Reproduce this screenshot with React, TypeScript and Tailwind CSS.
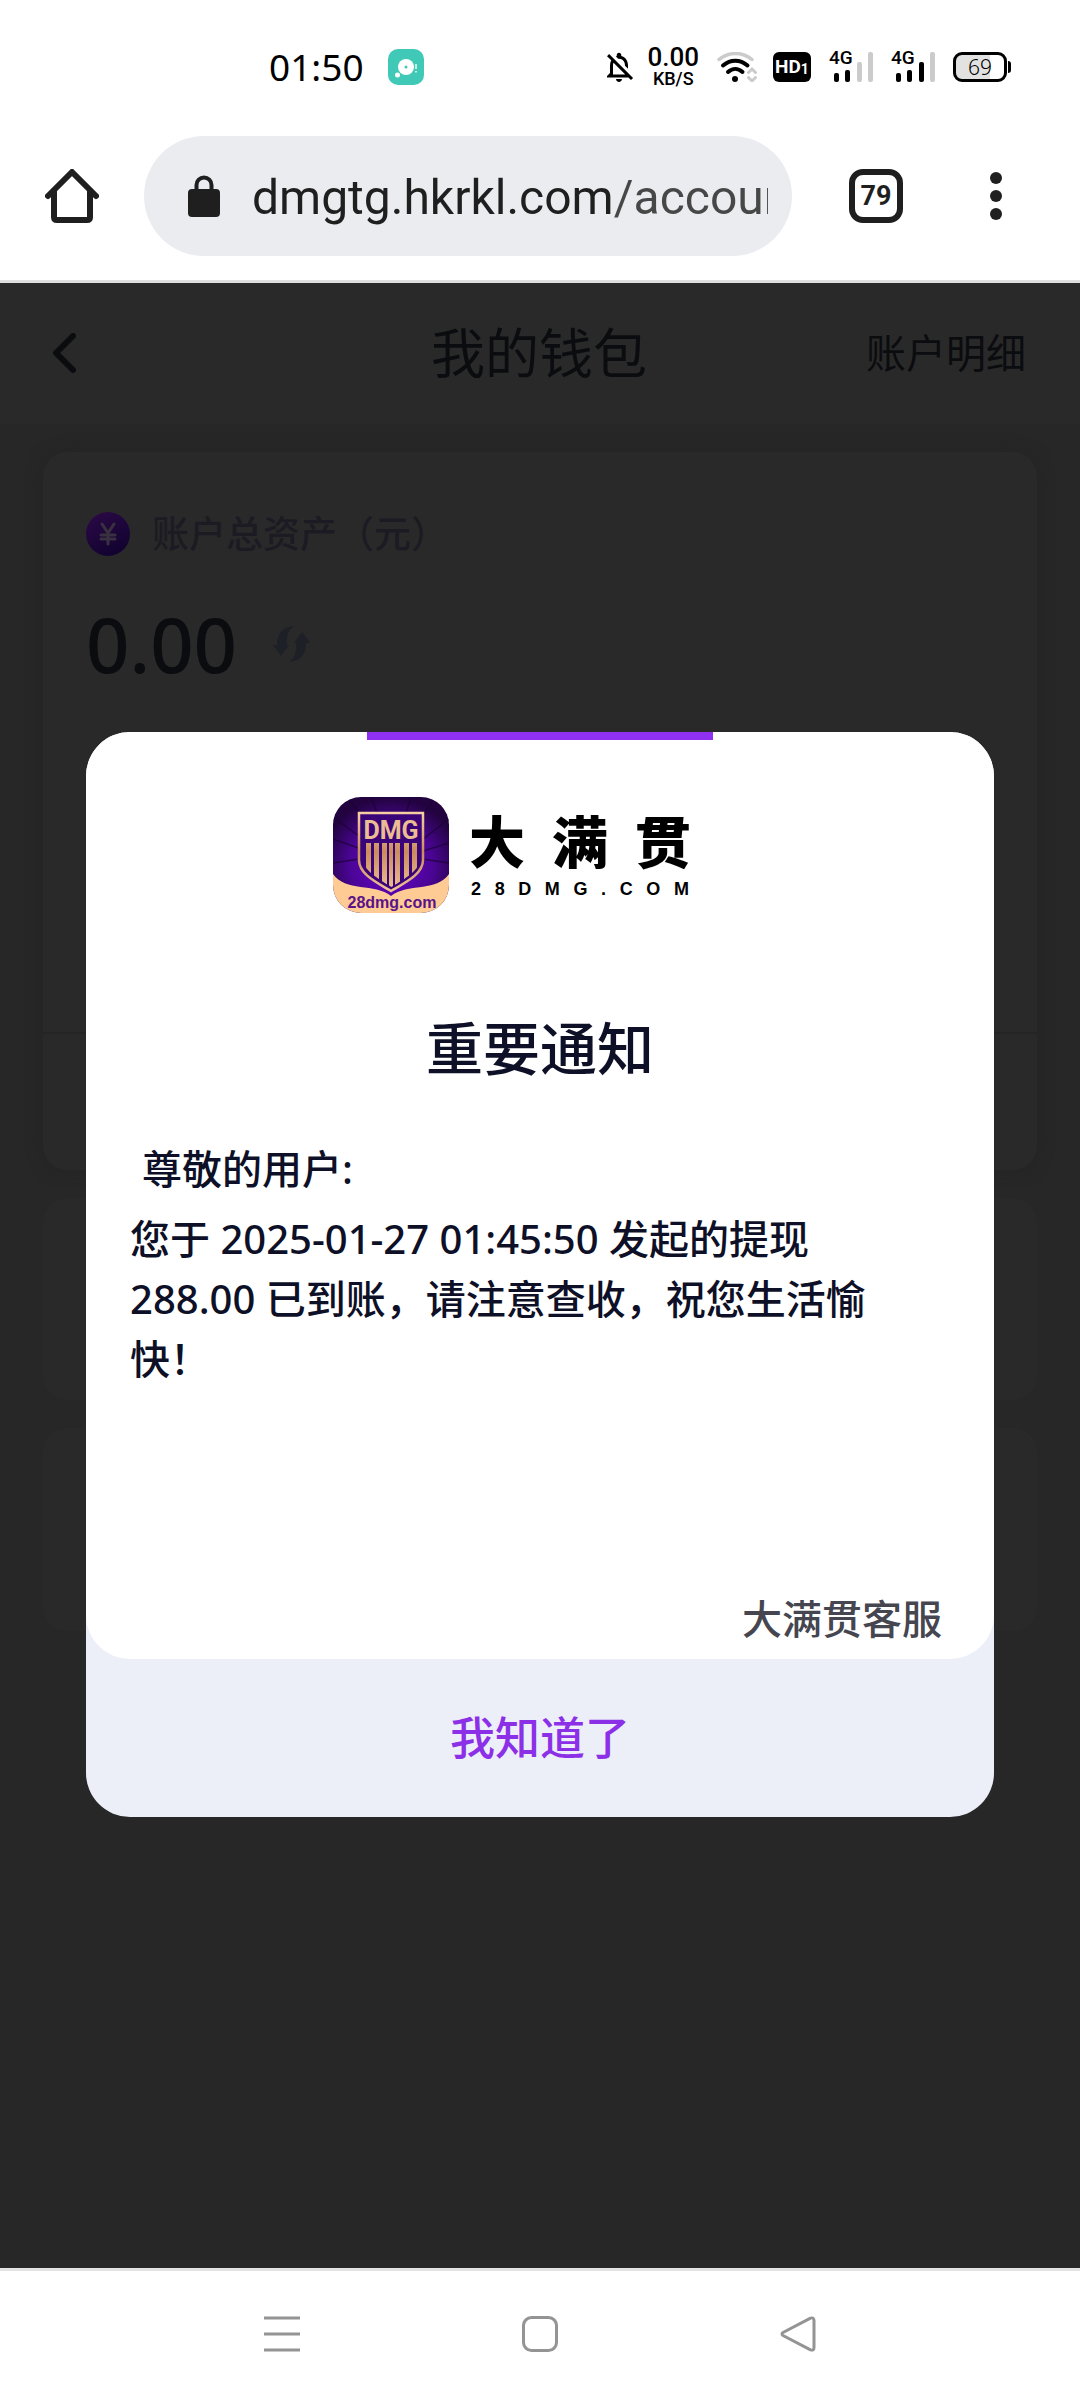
import React, { useState } from 'react'
import { MdOutlineNotificationsOff } from 'react-icons/md'

interface SignalProps {
  label: string
  strength: number
}

const bars = [
  { x: 5, y: 21 },
  { x: 16, y: 18 },
  { x: 28, y: 10 },
  { x: 39, y: 0 }
]

const Signal: React.FC<SignalProps> = ({ label, strength }) => (
  <div className="relative h-[30px] w-[45px]">
    <svg viewBox="0 0 45 30" className="h-full w-full" aria-hidden="true">
      {bars.map((bar, index) => (
        <rect
          key={bar.x}
          x={bar.x}
          y={bar.y}
          width="5"
          height={30 - bar.y}
          rx="2"
          fill={index < strength ? '#000' : '#cbcbcb'}
        />
      ))}
    </svg>
    <span className="absolute -top-1 left-0 font-['Roboto'] text-[19px] leading-[20px] font-medium">
      {label}
    </span>
  </div>
)

const WifiIcon = () => (
  <svg viewBox="0 0 40 30" className="h-[30px] w-10" fill="none" strokeLinecap="round" aria-hidden="true">
    <path d="M2 7.500C12 -.5 25 -.5 35 7.500" stroke="#cbcbcb" strokeWidth="3.500" />
    <path d="M6 13.500C13.500 7 23 7 30.500 13.500" stroke="#000" strokeWidth="4" />
    <path d="M11 20C15.500 16 21 16 25.500 20" stroke="#000" strokeWidth="4" />
    <circle cx="18" cy="27" r="3" fill="#000" />
    <path d="M31.500 20.500L35 17l3.500 3.500M31.500 25.500L35 29l3.500-3.500" stroke="#cbcbcb" strokeWidth="3" />
  </svg>
)

const StatusBar = () => (
  <div className="flex h-[112px] items-center justify-between pt-[22px] pr-[69px] pl-[269px] text-black">
    <div className="flex items-center gap-6">
      <span className="text-[37px] leading-[46px]">01:50</span>
      <svg viewBox="0 0 36 36" className="size-9" aria-hidden="true">
        <rect width="36" height="36" rx="10" fill="#3fc9b6" />
        <circle cx="18" cy="18" r="8" fill="#fff" />
        <circle cx="18" cy="18" r="1.500" fill="#3fc9b6" />
        <circle cx="9.500" cy="26" r="2.500" fill="#fff" />
        <path d="M28 15v5M28 22v1.500" stroke="#c4efe8" strokeWidth="2" />
      </svg>
    </div>
    <div className="flex items-center">
      <MdOutlineNotificationsOff className="mr-2.5 size-9" />
      <div className="mr-[18px] flex flex-col items-center font-['Roboto'] font-medium">
        <span className="text-[26px] leading-[24px]">0.00</span>
        <span className="text-[18px] leading-[20px]">KB/S</span>
      </div>
      <WifiIcon />
      <span className="mr-[18px] ml-4 flex h-[30px] w-[38px] items-center justify-center rounded-md bg-black font-['Roboto'] text-[19px] leading-[30px] font-bold text-white">
        HD<small className="pt-1 text-[14px]">1</small>
      </span>
      <Signal label="4G" strength={2} />
      <div className="w-[17px]" />
      <Signal label="4G" strength={3} />
      <div className="ml-[17px] flex items-center gap-px">
        <div className="h-[30px] w-[54px] overflow-hidden rounded-[9px] border-3 border-black bg-[linear-gradient(90deg,#e2e2e2_34px,#fff_34px)] text-center text-[21px] leading-[24px] font-light">
          69
        </div>
        <div className="h-3 w-[3px] rounded-r-sm bg-black" />
      </div>
    </div>
  </div>
)

const BrowserBar = () => (
  <div className="flex items-center border-b-3 border-[#dfdfdf] py-6 pr-[78px] pl-[45px] text-[#1f1f1f]">
    <button aria-label="主页" className="mr-[45px]">
      <svg viewBox="0 0 54 54" className="size-[54px]" fill="none" stroke="currentColor" strokeLinecap="round" aria-hidden="true">
        <path d="M3 27L27 3l24 24" strokeWidth="6" strokeLinejoin="round" />
        <path d="M9 22v26q0 3 3 3h30q3 0 3-3V22" strokeWidth="6" />
      </svg>
    </button>
    <label className="flex h-[120px] min-w-0 flex-1 items-center rounded-full bg-[#ebecf0] pr-6 pl-11">
      <svg viewBox="0 0 32 42" className="mr-8 h-[42px] w-8 shrink-0" aria-label="安全连接">
        <path d="M8.500 16V10a7.500 7.500 0 0 1 15 0v6" fill="none" stroke="#1f1f1f" strokeWidth="4" />
        <rect y="14" width="32" height="28" rx="4" fill="#1f1f1f" />
      </svg>
      <input
        type="text"
        aria-label="网址"
        defaultValue="dmgtg.hkrkl.com/account"
        className="h-16 w-full min-w-0 bg-[linear-gradient(90deg,#1f1f1f_360px,#474747_360px)] bg-clip-text pt-0.5 font-['Roboto'] text-[48px] leading-[62px] text-transparent outline-none"
      />
    </label>
    <button
      aria-label="标签页"
      className="ml-[57px] flex size-[54px] items-center justify-center rounded-[14px] border-6 border-current font-['Roboto'] text-[27px] leading-[42px] font-bold"
    >
      79
    </button>
    <button aria-label="更多" className="ml-[87px]">
      <svg viewBox="0 0 12 48" className="h-12 w-3" fill="currentColor" aria-hidden="true">
        <circle cx="6" cy="6" r="6" />
        <circle cx="6" cy="24" r="6" />
        <circle cx="6" cy="42" r="6" />
      </svg>
    </button>
  </div>
)

const Wallet = () => (
  <div className="text-[#0b0c0f]">
    <header className="grid h-[141px] grid-cols-[1fr_auto_1fr] items-center bg-[#292929] pr-[54px] pb-0.5 pl-[52px]">
      <button aria-label="返回">
        <svg viewBox="0 0 24 40" className="h-10 w-6" fill="none" stroke="currentColor" strokeWidth="6" strokeLinecap="round" strokeLinejoin="round" aria-hidden="true">
          <path d="M21 3L4 20l17 17" />
        </svg>
      </button>
      <h1 className="text-[54px] leading-[60px]">我的钱包</h1>
      <a href="#detail" className="justify-self-end text-[40px] leading-[60px]">账户明细</a>
    </header>

    <main className="flex flex-col gap-7 px-[43px] pt-7">
      <section className="rounded-3xl bg-[#292929] shadow-[0_0_16px_#242424]">
        <div className="flex h-[582px] flex-col gap-6 border-b-2 border-[#242424] px-[43px] pt-[52px]">
          <div className="flex items-center gap-[22px] text-[#1c1b23]">
            <svg viewBox="0 0 44 44" className="size-11" aria-hidden="true">
              <defs>
                <linearGradient id="coin" x1="0" y1="0" x2="0.500" y2="1">
                  <stop offset="0" stopColor="#2c0947" />
                  <stop offset="1" stopColor="#130331" />
                </linearGradient>
              </defs>
              <circle cx="22" cy="22" r="22" fill="url(#coin)" />
              <path d="M16 12l6 9 6-9M22 21v11M15 23h14M15 27h14" fill="none" stroke="#38313f" strokeWidth="3" strokeLinecap="round" />
            </svg>
            <span className="text-[37px] leading-[60px] font-medium">账户总资产（元）</span>
          </div>
          <div className="flex items-center gap-9">
            <span className="text-[76px] leading-[112px] font-medium">0.00</span>
            <button aria-label="刷新" className="text-[#1d2027]">
              <svg viewBox="0 0 37 36" className="h-9 w-[37px]" fill="currentColor" aria-hidden="true">
                <path d="M21 0C9 1 4 8 4 19H0l8 11 8-11h-2C13 11 15 4 21 0Z" />
                <path d="M16 36c12-1 17-8 17-19h4L29 6l-8 11h2c1 8-1 15-7 19Z" />
              </svg>
            </button>
          </div>
        </div>
        <div className="h-[136px]" />
      </section>
      <section className="h-[202px] rounded-3xl bg-[#292929]" />
      <section className="h-[203px] rounded-3xl bg-[#292929]" />
    </main>
  </div>
)

const LogoMark = () => (
  <svg viewBox="0 0 116 116" className="size-[116px]" role="img" aria-label="28dmg.com">
    <defs>
      <radialGradient id="violet" cx="0.500" cy="0.600" r="0.600">
        <stop offset="0" stopColor="#6a04cf" />
        <stop offset="0.600" stopColor="#4a0594" />
        <stop offset="1" stopColor="#22033f" />
      </radialGradient>
      <linearGradient id="gold" gradientUnits="userSpaceOnUse" x1="0" y1="16" x2="0" y2="94">
        <stop offset="0" stopColor="#f6cfa4" />
        <stop offset="0.500" stopColor="#c98c5f" />
        <stop offset="1" stopColor="#f0c195" />
      </linearGradient>
      <clipPath id="tile">
        <rect width="116" height="116" rx="28" />
      </clipPath>
      <clipPath id="shield">
        <path d="M30 20h57v42c0 11-14 19-28.500 28C44 81 30 73 30 62Z" />
      </clipPath>
    </defs>
    <g clipPath="url(#tile)">
      <rect width="116" height="116" fill="url(#violet)" />
      <path d="M0 20l30 22M0 42l28 10M14 0l20 26M38 0l6 16M78 0l-5 16M102 0L84 28M116 22L90 42M116 46L90 54M0 66l26-4M116 66l-26-4" stroke="#1d0238" strokeWidth="1.500" opacity="0.700" />
      <path d="M0 77C12 95 42 86 58 99 74 86 104 95 116 77v39H0Z" fill="#fdcb93" />
      <path d="M26 16h64v47c0 14-17 22-32 31C43 85 26 77 26 63Z" fill="#3a0478" stroke="url(#gold)" strokeWidth="2.500" />
      <g clipPath="url(#shield)">
        <rect x="33" y="46" width="5" height="40" fill="url(#gold)" />
        <rect x="41" y="46" width="5" height="40" fill="url(#gold)" />
        <rect x="49" y="46" width="5" height="44" fill="url(#gold)" />
        <rect x="56" y="46" width="4" height="46" fill="url(#gold)" />
        <rect x="62" y="46" width="5" height="44" fill="url(#gold)" />
        <rect x="71" y="46" width="5" height="40" fill="url(#gold)" />
        <rect x="79" y="46" width="5" height="40" fill="url(#gold)" />
      </g>
      <text x="58" y="42" textAnchor="middle" fontSize="25" fontWeight="700" fill="#eabd92" className="font-['Roboto']">
        DMG
      </text>
    </g>
    <text x="59" y="111" textAnchor="middle" fontSize="16" fontWeight="700" fill="#5a128a" className="font-['Liberation_Sans']">
      28dmg.com
    </text>
  </svg>
)

const Logo = () => (
  <div className="flex items-center gap-5 px-[203px]">
    <LogoMark />
    <div className="flex w-[222px] flex-col gap-2 text-black">
      <div className="flex justify-between text-[56px] leading-[60px] font-black">
        {['大', '满', '贯'].map((char) => (
          <span key={char}>{char}</span>
        ))}
      </div>
      <div className="flex justify-between px-0.5 font-['Liberation_Sans'] text-[18px] leading-5 font-bold">
        {'28DMG.COM'.split('').map((char, index) => (
          <span key={index}>{char}</span>
        ))}
      </div>
    </div>
  </div>
)

interface NoticeDialogProps {
  onClose: () => void
}

const NoticeDialog: React.FC<NoticeDialogProps> = ({ onClose }) => (
  <div className="absolute inset-0 flex items-center px-[86px] pb-0.5">
    <div role="dialog" aria-labelledby="notice-title" className="w-full overflow-hidden rounded-[44px] bg-[#edeff8]">
      <div className="flex flex-col rounded-b-[44px] bg-white px-11 pb-2.5 text-[#0d1026]">
        <div className="mb-[57px] h-2 w-[346px] self-center bg-[#9030f0]" />
        <Logo />
        <h2 id="notice-title" className="mt-[95px] text-center text-[57px] leading-[80px] font-medium">
          重要通知
        </h2>
        <div className="mt-[51px] min-h-[450px] pr-11 text-[40px] leading-[60px] font-medium">
          <p className="mb-2.5 px-3">尊敬的用户:</p>
          <p>您于 2025-01-27 01:45:50 发起的提现 288.00 已到账，请注意查收，祝您生活愉快！</p>
        </div>
        <p className="px-2 text-right text-[40px] leading-[60px] font-medium text-[#45464f]">大满贯客服</p>
      </div>
      <button onClick={onClose} className="h-[158px] w-full text-[45px] leading-[60px] font-medium text-[#8c30e8]">
        我知道了
      </button>
    </div>
  </div>
)

const NavBar = () => (
  <nav className="flex h-[132px] items-center justify-between border-t-3 border-[#e2e2e2] px-[264px] pb-1 text-[#949494]">
    <button aria-label="最近任务">
      <svg viewBox="0 0 36 36" className="size-9" fill="none" stroke="currentColor" strokeWidth="3" aria-hidden="true">
        <path d="M0 2h36M0 18h36M0 34h36" />
      </svg>
    </button>
    <button aria-label="主屏幕">
      <svg viewBox="0 0 36 36" className="size-9" fill="none" stroke="currentColor" strokeWidth="3" aria-hidden="true">
        <rect x="1.500" y="1.500" width="33" height="33" rx="8" />
      </svg>
    </button>
    <button aria-label="后退">
      <svg viewBox="0 0 36 36" className="size-9" fill="none" stroke="currentColor" strokeWidth="3" strokeLinejoin="round" aria-hidden="true">
        <path d="M30.500 2.200L3 16.500Q1 18 3 19.500L30.500 33.800Q34 35 34 31.500V4.500Q34 1 30.500 2.200Z" />
      </svg>
    </button>
  </nav>
)

export default function App() {
  const [isOpen, setIsOpen] = useState(true)

  return (
    <div className="flex min-h-screen flex-col bg-white font-['Noto_Sans','Noto_Sans_CJK_SC',sans-serif]" lang="zh-CN">
      <StatusBar />
      <BrowserBar />
      <div className="relative flex-1 bg-[#272727]">
        <Wallet />
        {isOpen && <NoticeDialog onClose={() => setIsOpen(false)} />}
      </div>
      <NavBar />
    </div>
  )
}
